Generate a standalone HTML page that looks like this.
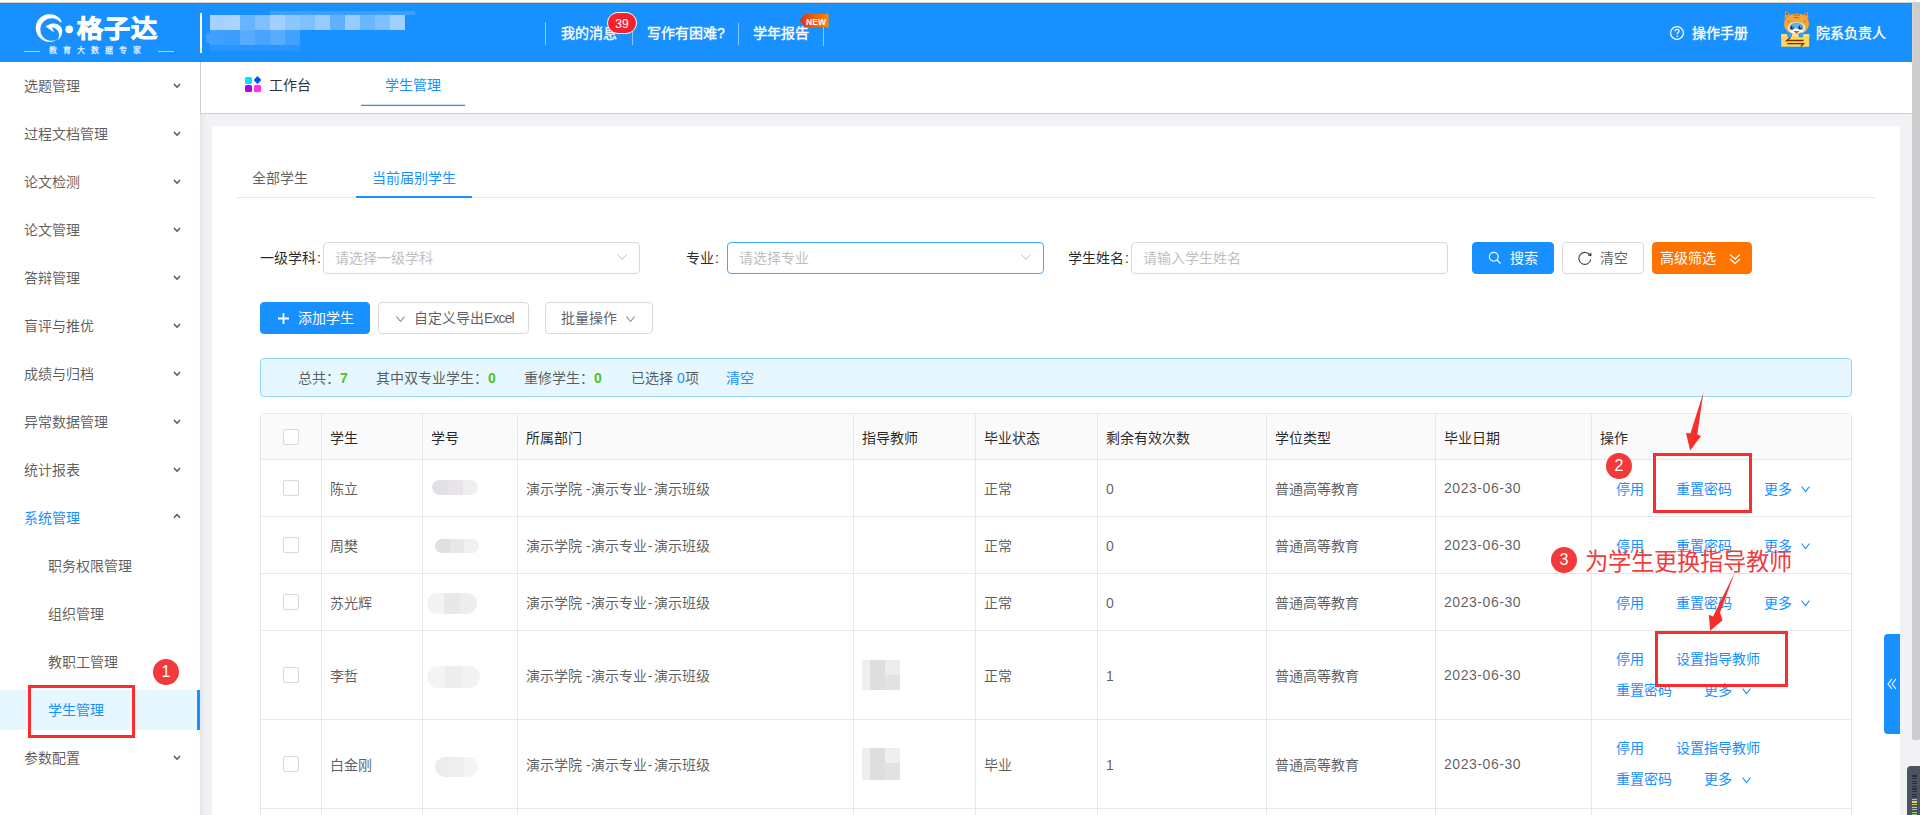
<!DOCTYPE html>
<html lang="zh-CN">
<head>
<meta charset="utf-8">
<style>
*{box-sizing:border-box;margin:0;padding:0}
html,body{width:1920px;height:815px;overflow:hidden}
body{position:relative;background:#f0f2f5;font-family:"Liberation Sans",sans-serif;font-size:14px;color:rgba(0,0,0,.65)}
.a{position:absolute}
.t{position:absolute;white-space:nowrap;line-height:20px;height:20px;font-size:14px}
.sep{position:absolute;width:1px;background:rgba(255,255,255,.5)}
.lbl{color:rgba(0,0,0,.85)}
.ph{color:#bfbfbf}
.inp{position:absolute;height:32px;border:1px solid #d9d9d9;border-radius:4px;background:#fff}
.btn{position:absolute;height:32px;border-radius:4px;border:1px solid #d9d9d9;background:#fff}
.vl{position:absolute;width:1px;background:#e8e8e8}
.hl{position:absolute;height:1px;background:#e8e8e8}
.cb{position:absolute;width:16px;height:16px;border:1px solid #d9d9d9;border-radius:2px;background:#fff}
.lk{color:#1890ff}
.rbox{position:absolute;border:3px solid #fb2c2c}
.circ{position:absolute;width:26px;height:26px;border-radius:13px;background:#f23a3a;color:#fff;font-size:16px;line-height:26px;text-align:center}
svg{position:absolute;overflow:visible}
</style>
</head>
<body>
<div class="a" style="left:0px;top:0px;width:1920px;height:3px;background:#fff"></div>
<div class="a" style="left:0px;top:2px;width:1912px;height:1px;background:#d9d2cb"></div>
<div class="a" style="left:1912px;top:2px;width:8px;height:1px;background:#d2d2d2"></div>
<div class="a" style="left:0px;top:3px;width:1912px;height:59px;background:#1890ff"></div>
<div class="a" style="left:0px;top:3px;width:1912px;height:1px;background:#0a8bff"></div>
<svg style="left:0;top:0" width="200" height="62" viewBox="0 0 200 62">
<g fill="#fff">
<path fill-rule="evenodd" d="M61.7,21.4 A13.8,13.8 0 1 0 58.5,38.5 A11.3,11.3 0 1 1 60.4,22.4 Z"/>
<path d="M45.6,26.6 C49,23 57,21.5 61,27 C63.5,31 62,37 57.5,40.5 C59.5,36.5 60,32 56,29 C54.5,28 53,27.5 52,27.3 L54.2,32.6 Z"/>
<circle cx="69.2" cy="29.3" r="3.9"/>
</g>
</svg>
<div class="a" style="left:77px;top:12px;width:84px;height:32px;color:#fff;font-size:26px;line-height:32px;font-weight:700;white-space:nowrap;letter-spacing:1px;-webkit-text-stroke:1px #fff;transform:scaleY(0.92);transform-origin:0 28px">格子达</div>
<div class="a" style="left:49px;top:45px;height:12px;color:rgba(255,255,255,.85);font-size:8px;line-height:12px;letter-spacing:6px;white-space:nowrap;font-weight:700">教育大数据专家</div>
<div class="a" style="left:24px;top:51px;width:16px;height:1px;background:rgba(255,255,255,.6)"></div>
<div class="a" style="left:158px;top:51px;width:16px;height:1px;background:rgba(255,255,255,.6)"></div>
<div class="a" style="left:200px;top:13px;width:2px;height:40px;background:#fff"></div>
<div class="a" style="left:270px;top:11px;width:145px;height:4px;background:#3d9fff"></div>
<div class="a" style="left:210px;top:15px;width:15px;height:15px;background:#a6d2ff"></div>
<div class="a" style="left:225px;top:15px;width:15px;height:15px;background:#aad4ff"></div>
<div class="a" style="left:240px;top:15px;width:15px;height:15px;background:#6ab4ff"></div>
<div class="a" style="left:255px;top:15px;width:15px;height:15px;background:#80c0ff"></div>
<div class="a" style="left:270px;top:15px;width:15px;height:15px;background:#a2d0ff"></div>
<div class="a" style="left:285px;top:15px;width:15px;height:15px;background:#8cc6ff"></div>
<div class="a" style="left:300px;top:15px;width:15px;height:15px;background:#80c0ff"></div>
<div class="a" style="left:315px;top:15px;width:15px;height:15px;background:#98ccff"></div>
<div class="a" style="left:330px;top:15px;width:15px;height:15px;background:#60b0ff"></div>
<div class="a" style="left:345px;top:15px;width:15px;height:15px;background:#98ccff"></div>
<div class="a" style="left:360px;top:15px;width:15px;height:15px;background:#6ab6ff"></div>
<div class="a" style="left:375px;top:15px;width:15px;height:15px;background:#80c0ff"></div>
<div class="a" style="left:390px;top:15px;width:15px;height:15px;background:#a0d0ff"></div>
<div class="a" style="left:210px;top:30px;width:15px;height:15px;background:#3fa0ff"></div>
<div class="a" style="left:225px;top:30px;width:15px;height:15px;background:#3a9dff"></div>
<div class="a" style="left:240px;top:30px;width:15px;height:15px;background:#58acff"></div>
<div class="a" style="left:255px;top:30px;width:15px;height:15px;background:#48a5ff"></div>
<div class="a" style="left:270px;top:30px;width:15px;height:15px;background:#58acff"></div>
<div class="a" style="left:285px;top:30px;width:15px;height:15px;background:#40a1ff"></div>
<div class="a" style="left:206px;top:33px;width:4px;height:10px;background:#3fa0ff;border-radius:3px 0 0 3px"></div>
<div class="a" style="left:210px;top:45px;width:90px;height:6px;background:#2894ff"></div>
<div class="sep" style="left:545px;top:22px;height:23px"></div>
<div class="sep" style="left:632px;top:22px;height:23px"></div>
<div class="sep" style="left:738px;top:23px;height:22px"></div>
<div class="sep" style="left:823px;top:27px;height:19px"></div>
<div class="t " style="left:561px;top:23px;color:#fff;-webkit-text-stroke:0.35px #fff">我的消息</div>
<div class="t " style="left:647px;top:23px;color:#fff;-webkit-text-stroke:0.35px #fff">写作有困难?</div>
<div class="t " style="left:753px;top:23px;color:#fff;-webkit-text-stroke:0.35px #fff">学年报告</div>
<div class="a" style="left:607px;top:12px;width:30px;height:22px;border-radius:11px;background:#f5222d;border:1px solid #fff;color:#fff;font-size:12px;line-height:22px;text-align:center">39</div>
<svg style="left:799px;top:12px" width="30" height="17" viewBox="0 0 30 17">
<defs><linearGradient id="ng" x1="0" x2="1" y1="0" y2="0"><stop offset="0" stop-color="#e8300a"/><stop offset="1" stop-color="#ff8a00"/></linearGradient></defs>
<path d="M0.5,8.5 L6,2 L28,2 L28,0.5 L29.5,2 L29.5,15 L28,16.5 L28,15 L6,15 Z" fill="url(#ng)"/>
<text x="17" y="12.5" font-family="Liberation Sans" font-size="8.5" font-weight="bold" fill="#fff" text-anchor="middle">NEW</text>
</svg>
<svg style="left:1669px;top:25px" width="16" height="16" viewBox="0 0 16 16">
<circle cx="8" cy="8" r="6.4" fill="none" stroke="#fff" stroke-width="1.2"/>
<path d="M6,6.3 C6,5 7,4.3 8,4.3 C9.1,4.3 10,5 10,6.1 C10,7.4 8.2,7.6 8.2,9.2" fill="none" stroke="#fff" stroke-width="1.2"/>
<circle cx="8.2" cy="11.2" r="0.8" fill="#fff"/>
</svg>
<div class="t " style="left:1692px;top:23px;color:#fff;-webkit-text-stroke:0.35px #fff">操作手册</div>
<div class="a" style="left:1654px;top:30px;width:110px;height:20px;border-radius:0 0 7px 7px;border-bottom:1.5px solid rgba(0,40,110,.06)"></div>
<svg style="left:1774px;top:0px" width="42" height="50" viewBox="0 0 42 50">
<path d="M10.5,19 L11.5,11 L16,14 Z" fill="#f0a030"/><path d="M34.5,19 L33.5,12 L29,15 Z" fill="#f0a030"/>
<path d="M12,15 L12.4,12.5 L14.5,14 Z" fill="#8a3a10"/><path d="M33,15.5 L32.8,13.5 L31,14.8 Z" fill="#8a3a10"/>
<ellipse cx="22.5" cy="24" rx="12.5" ry="10.5" fill="#f4a43c"/>
<path d="M19,15 L26,15 M20,17.5 L25,17.5 M13,21 L15.5,22 M32,21 L29.5,22" stroke="#c8641a" stroke-width="1"/>
<ellipse cx="22.5" cy="28" rx="9" ry="6.2" fill="#fde6a8"/>
<ellipse cx="22.5" cy="27.5" rx="7" ry="5" fill="#58b8f0"/>
<ellipse cx="22.5" cy="31.2" rx="6" ry="2.6" fill="#ffffff"/>
<ellipse cx="18" cy="27.6" rx="1.7" ry="2.2" fill="#1a2a78"/><ellipse cx="26" cy="27.6" rx="1.7" ry="2.2" fill="#1a2a78"/>
<circle cx="18.4" cy="26.8" r="0.6" fill="#fff"/><circle cx="26.4" cy="26.8" r="0.6" fill="#fff"/>
<path d="M19.5,31 L25.5,31 L22.5,34 Z" fill="#f04a10"/>
<rect x="7.2" y="34.3" width="28" height="12.4" fill="#ffd65a"/>
<rect x="7.2" y="34.3" width="28" height="2" fill="#ffe590"/>
<circle cx="15.5" cy="35" r="2.6" fill="#3a9ee8"/><circle cx="26.8" cy="35" r="2.6" fill="#3a9ee8"/>
<path d="M16.5,37.4 L12.6,40.5 L29.6,40.5 M13.2,43.6 L29.6,43.6 L26.8,46.4" fill="none" stroke="#7a2a00" stroke-width="1.3"/>
</svg>
<div class="t " style="left:1816px;top:23px;color:#fff;-webkit-text-stroke:0.35px #fff">院系负责人</div>
<div class="a" style="left:1912px;top:3px;width:8px;height:737px;background:#cdcdcd;border-radius:0 0 2px 2px"></div>
<div class="a" style="left:1912px;top:3px;width:1px;height:59px;background:#ded6ce"></div>
<div class="a" style="left:1912px;top:740px;width:8px;height:26px;background:#f2f2f2"></div>
<div class="a" style="left:1907px;top:766px;width:13px;height:49px;background:#4d5363;border-radius:4px 0 0 0"></div>
<div class="a" style="left:1912px;top:775.3px;width:5px;height:1.4px;background:#2a2f3a"></div>
<div class="a" style="left:1912px;top:777.9px;width:5px;height:1.4px;background:#2a2f3a"></div>
<div class="a" style="left:1912px;top:780.5px;width:5px;height:1.4px;background:#2a2f3a"></div>
<div class="a" style="left:1912px;top:783.1px;width:5px;height:1.4px;background:#2a2f3a"></div>
<div class="a" style="left:1912px;top:785.7px;width:5px;height:1.4px;background:#2a2f3a"></div>
<div class="a" style="left:1912px;top:788.3px;width:5px;height:1.4px;background:#2a2f3a"></div>
<div class="a" style="left:1912px;top:790.9px;width:5px;height:1.4px;background:#2a2f3a"></div>
<div class="a" style="left:1912px;top:793.5px;width:5px;height:1.4px;background:#2a2f3a"></div>
<div class="a" style="left:1912px;top:796.1px;width:5px;height:1.4px;background:#2a2f3a"></div>
<div class="a" style="left:1912px;top:798.7px;width:5px;height:1.4px;background:#d6c24a"></div>
<div class="a" style="left:1912px;top:801.3px;width:5px;height:1.4px;background:#e2d45a"></div>
<div class="a" style="left:1912px;top:803.9px;width:5px;height:1.4px;background:#c9c463"></div>
<div class="a" style="left:1912px;top:806.5px;width:5px;height:1.4px;background:#c4d657"></div>
<div class="a" style="left:1912px;top:809.1px;width:5px;height:1.4px;background:#a8c866"></div>
<div class="a" style="left:1912px;top:811.7px;width:5px;height:1.4px;background:#94d472"></div>
<div class="a" style="left:1912px;top:814.3px;width:5px;height:1.4px;background:#86c77a"></div>
<div class="a" style="left:0px;top:62px;width:200px;height:753px;background:#fff"></div>
<div class="t " style="left:24px;top:76px;color:rgba(0,0,0,.65)">选题管理</div>
<svg style="left:173px;top:83px" width="8" height="6" viewBox="0 0 8 6"><path d="M1,1 L4,4.2 L7,1" fill="none" stroke="#555" stroke-width="1.5"/></svg>
<div class="t " style="left:24px;top:124px;color:rgba(0,0,0,.65)">过程文档管理</div>
<svg style="left:173px;top:131px" width="8" height="6" viewBox="0 0 8 6"><path d="M1,1 L4,4.2 L7,1" fill="none" stroke="#555" stroke-width="1.5"/></svg>
<div class="t " style="left:24px;top:172px;color:rgba(0,0,0,.65)">论文检测</div>
<svg style="left:173px;top:179px" width="8" height="6" viewBox="0 0 8 6"><path d="M1,1 L4,4.2 L7,1" fill="none" stroke="#555" stroke-width="1.5"/></svg>
<div class="t " style="left:24px;top:220px;color:rgba(0,0,0,.65)">论文管理</div>
<svg style="left:173px;top:227px" width="8" height="6" viewBox="0 0 8 6"><path d="M1,1 L4,4.2 L7,1" fill="none" stroke="#555" stroke-width="1.5"/></svg>
<div class="t " style="left:24px;top:268px;color:rgba(0,0,0,.65)">答辩管理</div>
<svg style="left:173px;top:275px" width="8" height="6" viewBox="0 0 8 6"><path d="M1,1 L4,4.2 L7,1" fill="none" stroke="#555" stroke-width="1.5"/></svg>
<div class="t " style="left:24px;top:316px;color:rgba(0,0,0,.65)">盲评与推优</div>
<svg style="left:173px;top:323px" width="8" height="6" viewBox="0 0 8 6"><path d="M1,1 L4,4.2 L7,1" fill="none" stroke="#555" stroke-width="1.5"/></svg>
<div class="t " style="left:24px;top:364px;color:rgba(0,0,0,.65)">成绩与归档</div>
<svg style="left:173px;top:371px" width="8" height="6" viewBox="0 0 8 6"><path d="M1,1 L4,4.2 L7,1" fill="none" stroke="#555" stroke-width="1.5"/></svg>
<div class="t " style="left:24px;top:412px;color:rgba(0,0,0,.65)">异常数据管理</div>
<svg style="left:173px;top:419px" width="8" height="6" viewBox="0 0 8 6"><path d="M1,1 L4,4.2 L7,1" fill="none" stroke="#555" stroke-width="1.5"/></svg>
<div class="t " style="left:24px;top:460px;color:rgba(0,0,0,.65)">统计报表</div>
<svg style="left:173px;top:467px" width="8" height="6" viewBox="0 0 8 6"><path d="M1,1 L4,4.2 L7,1" fill="none" stroke="#555" stroke-width="1.5"/></svg>
<div class="t " style="left:24px;top:508px;color:#1890ff">系统管理</div>
<svg style="left:173px;top:513px" width="8" height="6" viewBox="0 0 8 6"><path d="M1,4.8 L4,1.6 L7,4.8" fill="none" stroke="#555" stroke-width="1.5"/></svg>
<div class="t " style="left:48px;top:556px;color:rgba(0,0,0,.65)">职务权限管理</div>
<div class="t " style="left:48px;top:604px;color:rgba(0,0,0,.65)">组织管理</div>
<div class="t " style="left:48px;top:652px;color:rgba(0,0,0,.65)">教职工管理</div>
<div class="a" style="left:0px;top:690px;width:200px;height:40px;background:#e6f7ff"></div>
<div class="a" style="left:197px;top:690px;width:3px;height:40px;background:#1890ff"></div>
<div class="t " style="left:48px;top:700px;color:#1890ff">学生管理</div>
<div class="t " style="left:24px;top:748px;color:rgba(0,0,0,.65)">参数配置</div>
<svg style="left:173px;top:755px" width="8" height="6" viewBox="0 0 8 6"><path d="M1,1 L4,4.2 L7,1" fill="none" stroke="#555" stroke-width="1.5"/></svg>
<div class="a" style="left:200px;top:114px;width:6px;height:701px;background:linear-gradient(90deg,#e3e5e9,#f0f2f5)"></div>
<div class="a" style="left:200px;top:62px;width:1712px;height:52px;background:#fff"></div>
<div class="a" style="left:200px;top:62px;width:1px;height:52px;background:#cfcfcf"></div>
<div class="a" style="left:200px;top:113px;width:1712px;height:1px;background:#d0d0d0"></div>
<svg style="left:245px;top:76px" width="17" height="16" viewBox="0 0 17 16">
<rect x="0" y="1" width="7" height="7" rx="1.5" fill="#00e2ff"/>
<rect x="9.7" y="1.2" width="5.6" height="5.6" rx="0.8" fill="#0050ff" transform="rotate(45 12.5 4)"/>
<rect x="0" y="9" width="7" height="7" rx="1.5" fill="#b000f2"/>
<rect x="9" y="9" width="7" height="7" rx="1.5" fill="#ff2ff0"/>
</svg>
<div class="t " style="left:269px;top:75px;color:#333">工作台</div>
<div class="t " style="left:385px;top:75px;color:#1890ff">学生管理</div>
<div class="a" style="left:361px;top:105px;width:104px;height:1px;background:#1890ff"></div>
<div class="a" style="left:361px;top:104px;width:104px;height:1px;background:rgba(24,144,255,.25)"></div>
<div class="a" style="left:212px;top:126px;width:1688px;height:700px;background:#fff;border-radius:2px"></div>
<div class="t " style="left:252px;top:168px;color:rgba(0,0,0,.65)">全部学生</div>
<div class="t " style="left:372px;top:168px;color:#1890ff">当前届别学生</div>
<div class="a" style="left:236px;top:197px;width:1640px;height:1px;background:#e8e8e8"></div>
<div class="a" style="left:356px;top:196px;width:116px;height:2px;background:#1890ff"></div>
<div class="t lbl" style="left:260px;top:248px;">一级学科<span style="margin-left:1px">:</span></div>
<div class="inp" style="left:323px;top:242px;width:317px"></div>
<div class="t ph" style="left:335px;top:248px;">请选择一级学科</div>
<svg style="left:617px;top:254px" width="10" height="6" viewBox="0 0 10 6"><path d="M0.5,0.5 L5.0,5.5 L9.5,0.5" fill="none" stroke="#bfbfbf" stroke-width="1"/></svg>
<div class="t lbl" style="left:686px;top:248px;">专业<span style="margin-left:1px">:</span></div>
<div class="inp" style="left:727px;top:242px;width:317px;border-color:#40a9ff"></div>
<div class="t ph" style="left:739px;top:248px;">请选择专业</div>
<svg style="left:1021px;top:254px" width="10" height="6" viewBox="0 0 10 6"><path d="M0.5,0.5 L5.0,5.5 L9.5,0.5" fill="none" stroke="#bfbfbf" stroke-width="1"/></svg>
<div class="t lbl" style="left:1068px;top:248px;">学生姓名<span style="margin-left:1px">:</span></div>
<div class="inp" style="left:1131px;top:242px;width:317px"></div>
<div class="t ph" style="left:1143px;top:248px;">请输入学生姓名</div>
<div class="btn" style="left:1472px;top:242px;width:82px;background:#1890ff;border-color:#1890ff"></div>
<svg style="left:1488px;top:251px" width="14" height="14" viewBox="0 0 14 14"><circle cx="5.8" cy="5.8" r="4.4" fill="none" stroke="#fff" stroke-width="1.15"/><path d="M9,9 L12.6,12.6" stroke="#fff" stroke-width="1.3"/></svg>
<div class="t " style="left:1510px;top:248px;color:#fff">搜索</div>
<div class="btn" style="left:1562px;top:242px;width:82px"></div>
<svg style="left:1578px;top:251px" width="14" height="14" viewBox="0 0 14 14"><path d="M12.2,4.6 A6,6 0 1 0 12.8,8.4" fill="none" stroke="#444" stroke-width="1.1"/><path d="M9.6,4.6 L13.6,5.2 L13.2,1.4 Z" fill="#444"/></svg>
<div class="t " style="left:1600px;top:248px;color:rgba(0,0,0,.65)">清空</div>
<div class="btn" style="left:1652px;top:242px;width:100px;background:#ff7300;border-color:#ff7300"></div>
<div class="t " style="left:1660px;top:248px;color:#fff">高级筛选</div>
<svg style="left:1729px;top:253px" width="12" height="12" viewBox="0 0 12 12"><path d="M1,1.5 L6,6 L11,1.5 M1,6 L6,10.5 L11,6" fill="none" stroke="#fff" stroke-width="1.3"/></svg>
<div class="btn" style="left:260px;top:302px;width:110px;background:#1890ff;border-color:#1890ff"></div>
<svg style="left:278px;top:313px" width="11" height="11" viewBox="0 0 11 11"><path d="M5.5,0 L5.5,11 M0,5.5 L11,5.5" stroke="#fff" stroke-width="1.8"/></svg>
<div class="t " style="left:298px;top:308px;color:#fff">添加学生</div>
<div class="btn" style="left:378px;top:302px;width:151px"></div>
<svg style="left:396px;top:316px" width="9" height="6" viewBox="0 0 9 6"><path d="M0.5,0.5 L4.5,5.5 L8.5,0.5" fill="none" stroke="#666" stroke-width="1"/></svg>
<div class="t " style="left:414px;top:308px;color:rgba(0,0,0,.65)">自定义导出<span style="letter-spacing:-0.9px">Excel</span></div>
<div class="btn" style="left:545px;top:302px;width:108px"></div>
<div class="t " style="left:561px;top:308px;color:rgba(0,0,0,.65)">批量操作</div>
<svg style="left:626px;top:316px" width="9" height="6" viewBox="0 0 9 6"><path d="M0.5,0.5 L4.5,5.5 L8.5,0.5" fill="none" stroke="#666" stroke-width="1"/></svg>
<div class="a" style="left:260px;top:358px;width:1592px;height:39px;background:#e6f7ff;border:1px solid #91d5ff;border-radius:4px"></div>
<div class="t " style="left:298px;top:368px;">总共：</div>
<div class="t " style="left:340px;top:368px;color:#52c41a;font-weight:bold">7</div>
<div class="t " style="left:376px;top:368px;">其中双专业学生：</div>
<div class="t " style="left:488px;top:368px;color:#52c41a;font-weight:bold">0</div>
<div class="t " style="left:524px;top:368px;">重修学生：</div>
<div class="t " style="left:594px;top:368px;color:#52c41a;font-weight:bold">0</div>
<div class="t " style="left:631px;top:368px;">已选择 <span style="color:#1890ff">0</span>项</div>
<div class="t " style="left:726px;top:368px;color:#1890ff">清空</div>
<div class="a" style="left:260px;top:413px;width:1592px;height:420px;border:1px solid #e8e8e8;border-radius:4px 4px 0 0;background:#fff"></div>
<div class="a" style="left:261px;top:414px;width:1590px;height:45px;background:#fafafa;border-radius:3px 3px 0 0"></div>
<div class="a" style="left:261px;top:459px;width:1590px;height:1px;background:#e8e8e8"></div>
<div class="a" style="left:261px;top:516px;width:1590px;height:1px;background:#e8e8e8"></div>
<div class="a" style="left:261px;top:573px;width:1590px;height:1px;background:#e8e8e8"></div>
<div class="a" style="left:261px;top:630px;width:1590px;height:1px;background:#e8e8e8"></div>
<div class="a" style="left:261px;top:719px;width:1590px;height:1px;background:#e8e8e8"></div>
<div class="a" style="left:261px;top:808px;width:1590px;height:1px;background:#e8e8e8"></div>
<div class="a" style="left:321px;top:414px;width:1px;height:401px;background:#e8e8e8"></div>
<div class="a" style="left:422px;top:414px;width:1px;height:401px;background:#e8e8e8"></div>
<div class="a" style="left:517px;top:414px;width:1px;height:401px;background:#e8e8e8"></div>
<div class="a" style="left:853px;top:414px;width:1px;height:401px;background:#e8e8e8"></div>
<div class="a" style="left:975px;top:414px;width:1px;height:401px;background:#e8e8e8"></div>
<div class="a" style="left:1097px;top:414px;width:1px;height:401px;background:#e8e8e8"></div>
<div class="a" style="left:1266px;top:414px;width:1px;height:401px;background:#e8e8e8"></div>
<div class="a" style="left:1435px;top:414px;width:1px;height:401px;background:#e8e8e8"></div>
<div class="a" style="left:1591px;top:414px;width:1px;height:401px;background:#e8e8e8"></div>
<div class="t lbl" style="left:330px;top:428px;">学生</div>
<div class="t lbl" style="left:431px;top:428px;">学号</div>
<div class="t lbl" style="left:526px;top:428px;">所属部门</div>
<div class="t lbl" style="left:862px;top:428px;">指导教师</div>
<div class="t lbl" style="left:984px;top:428px;">毕业状态</div>
<div class="t lbl" style="left:1106px;top:428px;">剩余有效次数</div>
<div class="t lbl" style="left:1275px;top:428px;">学位类型</div>
<div class="t lbl" style="left:1444px;top:428px;">毕业日期</div>
<div class="t lbl" style="left:1600px;top:428px;">操作</div>
<div class="cb" style="left:283px;top:429px"></div>
<div class="cb" style="left:283px;top:480px"></div>
<div class="t " style="left:330px;top:479px;">陈立</div>
<div class="t " style="left:526px;top:479px;">演示学院 -演示专业<span style="margin-left:1.3px;letter-spacing:1.2px">-</span>演示班级</div>
<div class="t " style="left:984px;top:479px;">正常</div>
<div class="t " style="left:1106px;top:479px;">0</div>
<div class="t " style="left:1275px;top:479px;">普通高等教育</div>
<div class="t " style="left:1444px;top:478px;letter-spacing:0.55px">2023-06-30</div>
<div class="t lk" style="left:1616px;top:479px;">停用</div>
<div class="t lk" style="left:1676px;top:479px;">重置密码</div>
<div class="t lk" style="left:1764px;top:479px;">更多</div>
<svg style="left:1801px;top:486px" width="9" height="6" viewBox="0 0 9 6"><path d="M0.5,0.5 L4.5,5.5 L8.5,0.5" fill="none" stroke="#1890ff" stroke-width="1.2"/></svg>
<div class="cb" style="left:283px;top:537px"></div>
<div class="t " style="left:330px;top:536px;">周樊</div>
<div class="t " style="left:526px;top:536px;">演示学院 -演示专业<span style="margin-left:1.3px;letter-spacing:1.2px">-</span>演示班级</div>
<div class="t " style="left:984px;top:536px;">正常</div>
<div class="t " style="left:1106px;top:536px;">0</div>
<div class="t " style="left:1275px;top:536px;">普通高等教育</div>
<div class="t " style="left:1444px;top:535px;letter-spacing:0.55px">2023-06-30</div>
<div class="t lk" style="left:1616px;top:536px;">停用</div>
<div class="t lk" style="left:1676px;top:536px;">重置密码</div>
<div class="t lk" style="left:1764px;top:536px;">更多</div>
<svg style="left:1801px;top:543px" width="9" height="6" viewBox="0 0 9 6"><path d="M0.5,0.5 L4.5,5.5 L8.5,0.5" fill="none" stroke="#1890ff" stroke-width="1.2"/></svg>
<div class="cb" style="left:283px;top:594px"></div>
<div class="t " style="left:330px;top:593px;">苏光辉</div>
<div class="t " style="left:526px;top:593px;">演示学院 -演示专业<span style="margin-left:1.3px;letter-spacing:1.2px">-</span>演示班级</div>
<div class="t " style="left:984px;top:593px;">正常</div>
<div class="t " style="left:1106px;top:593px;">0</div>
<div class="t " style="left:1275px;top:593px;">普通高等教育</div>
<div class="t " style="left:1444px;top:592px;letter-spacing:0.55px">2023-06-30</div>
<div class="t lk" style="left:1616px;top:593px;">停用</div>
<div class="t lk" style="left:1676px;top:593px;">重置密码</div>
<div class="t lk" style="left:1764px;top:593px;">更多</div>
<svg style="left:1801px;top:600px" width="9" height="6" viewBox="0 0 9 6"><path d="M0.5,0.5 L4.5,5.5 L8.5,0.5" fill="none" stroke="#1890ff" stroke-width="1.2"/></svg>
<div class="cb" style="left:283px;top:667px"></div>
<div class="t " style="left:330px;top:666px;">李哲</div>
<div class="t " style="left:526px;top:666px;">演示学院 -演示专业<span style="margin-left:1.3px;letter-spacing:1.2px">-</span>演示班级</div>
<div class="t " style="left:984px;top:666px;">正常</div>
<div class="t " style="left:1106px;top:666px;">1</div>
<div class="t " style="left:1275px;top:666px;">普通高等教育</div>
<div class="t " style="left:1444px;top:665px;letter-spacing:0.55px">2023-06-30</div>
<div class="t lk" style="left:1616px;top:649px;">停用</div>
<div class="t lk" style="left:1676px;top:649px;">设置指导教师</div>
<div class="t lk" style="left:1616px;top:680px;">重置密码</div>
<div class="t lk" style="left:1704px;top:680px;">更多</div>
<svg style="left:1742px;top:688px" width="9" height="6" viewBox="0 0 9 6"><path d="M0.5,0.5 L4.5,5.5 L8.5,0.5" fill="none" stroke="#1890ff" stroke-width="1.2"/></svg>
<div class="cb" style="left:283px;top:756px"></div>
<div class="t " style="left:330px;top:755px;">白金刚</div>
<div class="t " style="left:526px;top:755px;">演示学院 -演示专业<span style="margin-left:1.3px;letter-spacing:1.2px">-</span>演示班级</div>
<div class="t " style="left:984px;top:755px;">毕业</div>
<div class="t " style="left:1106px;top:755px;">1</div>
<div class="t " style="left:1275px;top:755px;">普通高等教育</div>
<div class="t " style="left:1444px;top:754px;letter-spacing:0.55px">2023-06-30</div>
<div class="t lk" style="left:1616px;top:738px;">停用</div>
<div class="t lk" style="left:1676px;top:738px;">设置指导教师</div>
<div class="t lk" style="left:1616px;top:769px;">重置密码</div>
<div class="t lk" style="left:1704px;top:769px;">更多</div>
<svg style="left:1742px;top:777px" width="9" height="6" viewBox="0 0 9 6"><path d="M0.5,0.5 L4.5,5.5 L8.5,0.5" fill="none" stroke="#1890ff" stroke-width="1.2"/></svg>
<div class="a" style="left:432px;top:480px;width:46px;height:15px;background:linear-gradient(90deg,#e2e1e6 0.0%,#e2e1e6 33.3%,#e6e4e8 33.3%,#e6e4e8 66.7%,#eeeff0 66.7%,#eeeff0 100.0%);border-radius:8px"></div>
<div class="a" style="left:435px;top:539px;width:44px;height:14px;background:linear-gradient(90deg,#e0dfe3 0.0%,#e0dfe3 33.3%,#e8e7ea 33.3%,#e8e7ea 66.7%,#f0f0f2 66.7%,#f0f0f2 100.0%);border-radius:7px"></div>
<div class="a" style="left:427px;top:593px;width:50px;height:21px;background:linear-gradient(90deg,#f4f3f4 0.0%,#f4f3f4 33.3%,#e8e7ea 33.3%,#e8e7ea 66.7%,#ededf0 66.7%,#ededf0 100.0%);border-radius:10px"></div>
<div class="a" style="left:427px;top:666px;width:53px;height:22px;background:linear-gradient(90deg,#f4f4f4 0.0%,#f4f4f4 33.3%,#ededee 33.3%,#ededee 66.7%,#f2f2f2 66.7%,#f2f2f2 100.0%);border-radius:11px"></div>
<div class="a" style="left:435px;top:757px;width:43px;height:20px;background:linear-gradient(90deg,#ececee 0.0%,#ececee 33.3%,#efeff0 33.3%,#efeff0 66.7%,#f4f4f5 66.7%,#f4f4f5 100.0%);border-radius:10px"></div>
<div class="a" style="left:862px;top:660px;width:8px;height:30px;background:#efefef"></div>
<div class="a" style="left:870px;top:660px;width:15px;height:30px;background:#dedede"></div>
<div class="a" style="left:885px;top:660px;width:15px;height:15px;background:#ececec"></div>
<div class="a" style="left:885px;top:675px;width:15px;height:15px;background:#e2e2e2"></div>
<div class="a" style="left:862px;top:748px;width:8px;height:32px;background:#eeeeee"></div>
<div class="a" style="left:870px;top:748px;width:15px;height:32px;background:#dedede"></div>
<div class="a" style="left:885px;top:748px;width:15px;height:15px;background:#eeefef"></div>
<div class="a" style="left:885px;top:763px;width:15px;height:17px;background:#e2e2e2"></div>
<div class="a" style="left:1884px;top:634px;width:16px;height:100px;background:#1890ff;border-radius:4px 0 0 4px"></div>
<svg style="left:1887px;top:678px" width="10" height="12" viewBox="0 0 10 12"><path d="M5,1 L1,6 L5,11 M9,1 L5,6 L9,11" fill="none" stroke="#fff" stroke-width="1.1"/></svg>
<div class="rbox" style="left:28px;top:685px;width:107px;height:53px"></div>
<div class="circ" style="left:153px;top:659px">1</div>
<div class="rbox" style="left:1653px;top:453px;width:99px;height:60px"></div>
<div class="circ" style="left:1606px;top:453px">2</div>
<div class="rbox" style="left:1655px;top:631px;width:133px;height:56px"></div>
<div class="circ" style="left:1551px;top:547px">3</div>
<div class="a" style="left:1585px;top:547px;font-size:23.3px;line-height:30px;color:#f23b3b;white-space:nowrap">为学生更换指导教师</div>
<svg style="left:0;top:0" width="1920" height="815" viewBox="0 0 1920 815">
<path d="M1703.4,392.4 L1697.3,434.5 L1701,436 L1690.2,450.5 L1686,433 L1690.5,433.3 Z" fill="#fb2c2c"/>
<path d="M1735,572 L1720,612.5 L1722.6,620.2 L1710.2,630.8 L1708.8,614.7 L1713,616.5 Z" fill="#fb2c2c"/>
</svg>
</body>
</html>
